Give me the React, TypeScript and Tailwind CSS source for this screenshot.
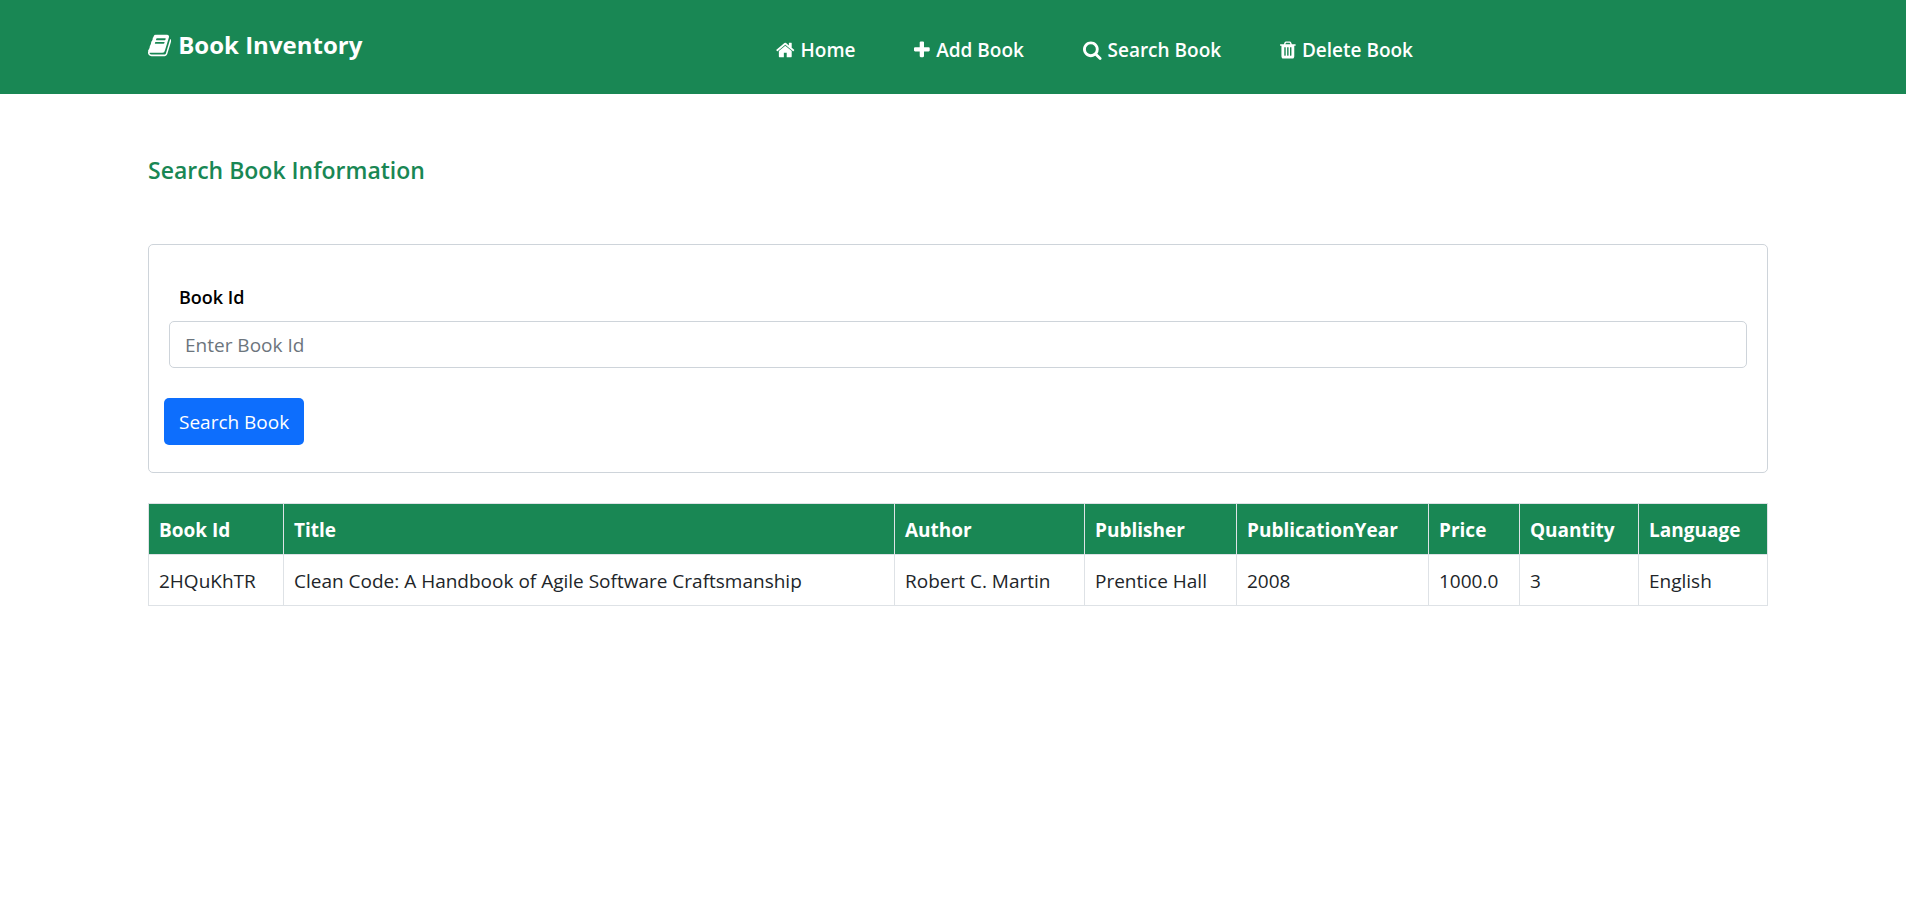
import { useState } from "react";
import type { ReactNode } from "react";

const icons = {
  book: {
    viewBox: "64 0 1664 1792",
    path: "M1703 478q40 57 18 129l-275 906q-19 64-76.500 107.500t-122.500 43.500h-923q-77 0-148.500-53.500t-99.500-131.500q-24-67-2-127 0-4 3-27t4-37q1-8-3-21.500t-3-19.500q2-11 8-21t16.500-23.500 16.500-23.500q23-38 45-91.500t30-91.500q3-10 .5-30t-.5-28q3-11 17-28t17-23q21-36 42-92t25-90q1-9-2.500-32t.5-28q4-13 22-30.500t22-22.500q19-26 42.500-84.500t27.500-96.500q1-8-3-25.500t-2-26.500q2-8 9-18t18-23 17-21q8-12 16.500-30.500t15-35 16-36 19.500-32 26.500-23.500 36-11.500 47.500 5.500l-1 3q38-9 51-9h761q74 0 114 56t18 130l-274 906q-36 119-71.500 153.500t-128.500 34.500h-869q-27 0-38 15-11 16-1 43 24 70 144 70h923q29 0 56-15.500t35-41.500l300-987q7-22 5-57 38 15 59 43zm-1064 2q-4 13 2 22.500t20 9.500h608q13 0 25.500-9.500t16.500-22.500l21-64q4-13-2-22.500t-20-9.500h-608q-13 0-25.500 9.500t-16.500 22.500zm-83 256q-4 13 2 22.500t20 9.500h608q13 0 25.500-9.500t16.500-22.500l21-64q4-13-2-22.500t-20-9.500h-608q-13 0-25.500 9.500t-16.500 22.500z",
  },
  home: {
    viewBox: "64 0 1664 1792",
    path: "M1472 992v480q0 26-19 45t-45 19h-384v-384h-256v384h-384q-26 0-45-19t-19-45v-480q0-1 .5-3t.5-3l575-474 575 474q1 2 1 6zm223-69l-62 74q-8 9-21 11h-3q-13 0-21-7l-692-577-692 577q-12 8-24 7-13-2-21-11l-62-74q-8-10-7-23.500t11-21.500l719-599q32-26 76-26t76 26l244 204v-195q0-14 9-23t23-9h192q14 0 23 9t9 23v408l219 182q10 8 11 21.500t-7 23.500z",
  },
  plus: {
    viewBox: "192 0 1408 1792",
    path: "M1600 736v192q0 40-28 68t-68 28h-416v416q0 40-28 68t-68 28h-192q-40 0-68-28t-28-68v-416h-416q-40 0-68-28t-28-68v-192q0-40 28-68t68-28h416v-416q0-40 28-68t68-28h192q40 0 68 28t28 68v416h416q40 0 68 28t28 68z",
  },
  search: {
    viewBox: "64 0 1664 1792",
    path: "M1216 832q0-185-131.500-316.500t-316.500-131.500-316.500 131.500-131.500 316.500 131.500 316.500 316.500 131.500 316.500-131.500 131.500-316.500zm512 832q0 52-38 90t-90 38q-54 0-90-38l-343-342q-179 124-399 124-143 0-273.500-55.500t-225-150-150-225-55.500-273.500 55.500-273.500 150-225 225-150 273.500-55.500 273.500 55.500 225 150 150 225 55.500 273.500q0 220-124 399l343 343q37 37 37 90z",
  },
  trash: {
    viewBox: "192 0 1408 1792",
    path: "M704 1376v-704q0-14-9-23t-23-9h-64q-14 0-23 9t-9 23v704q0 14 9 23t23 9h64q14 0 23-9t9-23zm256 0v-704q0-14-9-23t-23-9h-64q-14 0-23 9t-9 23v704q0 14 9 23t23 9h64q14 0 23-9t9-23zm256 0v-704q0-14-9-23t-23-9h-64q-14 0-23 9t-9 23v704q0 14 9 23t23 9h64q14 0 23-9t9-23zm-544-992h448l-48-117q-7-9-17-11h-317q-10 2-17 11zm928 32v64q0 14-9 23t-23 9h-96v948q0 83-47 143.500t-113 60.500h-832q-66 0-113-58.500t-47-141.500v-952h-96q-14 0-23-9t-9-23v-64q0-14 9-23t23-9h309l70-167q15-37 54-63t79-26h320q40 0 79 26t54 63l70 167h309q14 0 23 9t9 23z",
  },
};

type IconName = keyof typeof icons;

function Icon({ name, className }: { name: IconName; className: string }) {
  return (
    <svg viewBox={icons[name].viewBox} className={`${className} w-auto shrink-0`} fill="currentColor" aria-hidden="true">
      <path d={icons[name].path} />
    </svg>
  );
}

const links: { icon: IconName; label: string }[] = [
  { icon: "home", label: "Home" },
  { icon: "plus", label: "Add Book" },
  { icon: "search", label: "Search Book" },
  { icon: "trash", label: "Delete Book" },
];

const columns = [
  { title: "Book Id", width: "w-[135px]" },
  { title: "Title", width: "" },
  { title: "Author", width: "w-[190px]" },
  { title: "Publisher", width: "w-[152px]" },
  { title: "PublicationYear", width: "w-[192px]" },
  { title: "Price", width: "w-[91px]" },
  { title: "Quantity", width: "w-[119px]" },
  { title: "Language", width: "w-[129px]" },
];

const books = [
  ["2HQuKhTR", "Clean Code: A Handbook of Agile Software Craftsmanship", "Robert C. Martin", "Prentice Hall", "2008", "1000.0", "3", "English"],
];

function Container({ children }: { children: ReactNode }) {
  return <div className="mx-auto max-w-[1650px] pl-5 pr-[10px]">{children}</div>;
}

export default function App() {
  const [bookId, setBookId] = useState("");

  return (
    <div className="min-h-screen bg-white font-['Open_Sans',sans-serif] text-[19px] leading-[30px] text-[#212529]">
      <header className="bg-[#198754] text-white">
        <Container>
          <div className="flex min-h-[94px] flex-wrap items-start pt-[27px]">
            <a href="#" className="flex items-center gap-[7px] text-2xl leading-9 font-bold">
              <Icon name="book" className="h-[25px]" />
              Book Inventory
            </a>
            <nav className="ml-auto flex flex-wrap gap-x-[59px] pt-2 pr-[355px] font-semibold">
              {links.map((link) => (
                <a key={link.label} href="#" className="flex items-center gap-[6px]">
                  <Icon name={link.icon} className="h-5" />
                  {link.label}
                </a>
              ))}
            </nav>
          </div>
        </Container>
      </header>
      <main>
        <Container>
          <h1 className="pt-[60px] text-[23px] leading-8 font-semibold text-[#198754]">Search Book Information</h1>
          <form
            className="mt-[58px] rounded-[5px] border border-[#ced4da] px-[15px] pt-[37px] pb-[27px]"
            onSubmit={(event) => event.preventDefault()}
          >
            <div className="px-[5px]">
              <label htmlFor="book-id" className="ml-[10px] block text-lg leading-[30px] font-semibold text-black">
                Book Id
              </label>
              <input
                id="book-id"
                type="text"
                placeholder="Enter Book Id"
                value={bookId}
                onChange={(event) => setBookId(event.target.value)}
                className="mt-[9px] block h-[47px] w-full rounded-[5px] border border-[#ced4da] bg-white px-[15px] placeholder:text-[#6c757d]"
              />
            </div>
            <button type="submit" className="mt-[30px] block h-[47px] rounded-[5px] bg-[#0d6efd] px-[15px] text-white">
              Search Book
            </button>
          </form>
          <table className="mt-[30px] w-full table-fixed border-collapse text-left">
            <thead className="bg-[#198754] text-white">
              <tr>
                {columns.map((column) => (
                  <th key={column.title} className={`${column.width} border border-[#dee2e6] px-[10px] pt-[11px] pb-[9px] font-bold whitespace-nowrap`}>
                    {column.title}
                  </th>
                ))}
              </tr>
            </thead>
            <tbody>
              {books.map((book) => (
                <tr key={book[0]}>
                  {book.map((value, index) => (
                    <td key={columns[index].title} className="border border-[#dee2e6] px-[10px] pt-[11px] pb-[9px]">
                      {value}
                    </td>
                  ))}
                </tr>
              ))}
            </tbody>
          </table>
        </Container>
      </main>
    </div>
  );
}
